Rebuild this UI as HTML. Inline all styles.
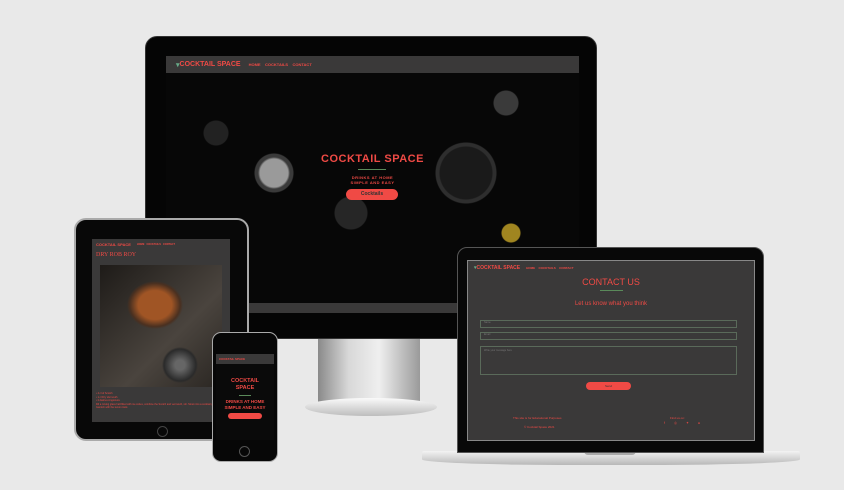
<!DOCTYPE html>
<html><head><style>
*{margin:0;padding:0;box-sizing:border-box}
body{width:844px;height:490px;background:#e9e9e9;position:relative;overflow:hidden;font-family:"Liberation Sans",sans-serif}
.a{position:absolute}
.nav{background:#3a3939;display:flex;align-items:center;font-weight:bold}
</style></head><body>
<!-- monitor stand -->
<div class="a" style="left:318px;top:336px;width:102px;height:70px;background:linear-gradient(90deg,#8a8a8a,#d8d8d8 30%,#efefef 60%,#9a9a9a);"></div>
<div class="a" style="left:305px;top:398px;width:132px;height:18px;border-radius:50%;background:linear-gradient(#fafafa,#bdbdbd);"></div>
<!-- monitor -->
<div class="a" style="left:145px;top:36px;width:452px;height:303px;background:#050505;border-radius:12px;border:1px solid #333"></div>
<div class="a" style="left:166px;top:56px;width:413px;height:257px;background:#3a3939">
  <div class="nav" style="height:17px;padding-left:10px;font-size:7px;color:#f04a45"><span style="color:#6a8">▾</span>COCKTAIL SPACE<span style="font-size:4px;margin-left:8px">HOME &nbsp;&nbsp; COCKTAILS &nbsp;&nbsp; CONTACT</span></div>
  <div style="position:absolute;top:17px;left:0;width:413px;height:230px;background:radial-gradient(circle at 108px 100px,#9a9a9a 0 14px,#3a3a3a 16px 19px,transparent 20px),radial-gradient(circle at 300px 100px,#1a1a1a 0 26px,#2e2e2e 27px 30px,transparent 31px),radial-gradient(circle at 345px 160px,#a08520 0 9px,transparent 10px),radial-gradient(circle at 340px 30px,#3a3a3a 0 12px,transparent 13px),radial-gradient(circle at 185px 140px,#262626 0 16px,transparent 17px),radial-gradient(circle at 50px 60px,#222 0 12px,transparent 13px),#070707">
    <div class="a" style="left:0;width:413px;top:80px;text-align:center;font-size:11px;font-weight:bold;color:#f04a45;letter-spacing:.5px">COCKTAIL SPACE</div>
    <div class="a" style="left:192px;top:96px;width:28px;height:1px;background:#5a8a5a"></div>
    <div class="a" style="left:0;width:413px;top:102px;text-align:center;font-size:4px;font-weight:bold;color:#f04a45;line-height:5px;letter-spacing:.5px">DRINKS AT HOME<br>SIMPLE AND EASY</div>
    <div class="a" style="left:180px;top:116px;width:52px;height:11px;border-radius:6px;background:#f04a45;font-size:5px;text-align:center;line-height:11px;color:#333;font-weight:bold">Cocktails</div>
  </div>
</div>
<!-- tablet -->
<div class="a" style="left:74px;top:218px;width:175px;height:223px;background:#080808;border-radius:12px;border:2px solid #aaa"></div>
<div class="a" style="left:157px;top:426px;width:11px;height:11px;border-radius:50%;border:1px solid #444"></div>
<div class="a" style="left:92px;top:239px;width:138px;height:183px;background:#3a3939">
  <div class="nav" style="height:10px;padding-left:4px;font-size:4px;color:#f04a45">COCKTAIL SPACE<span style="font-size:2.5px;margin-left:6px">HOME &nbsp; COCKTAILS &nbsp; CONTACT</span></div>
  <div style="font-family:'Liberation Serif',serif;font-size:6px;color:#f04a45;padding:3px 4px">DRY ROB ROY</div>
  <div class="a" style="left:8px;top:26px;width:122px;height:122px;background:radial-gradient(ellipse 28px 24px at 55px 40px,#a05525 0 60%,#4a3020 90%,transparent 100%),radial-gradient(circle at 80px 100px,#666 0 5px,#2a2a2a 16px,transparent 18px),linear-gradient(135deg,#1e1b18,#4a443e 60%,#2a2622)"></div>
  <div class="a" style="left:4px;top:153px;width:130px;font-size:2.5px;color:#f04a45;line-height:3.5px">• 4 cl of Scotch<br>• 1 cl Dry Vermouth<br>• 2 dashes Angostura<br>Fill a mixing glass half-filled with ice cubes, combine the Scotch and vermouth, stir. Strain into a cocktail glass, Garnish with the lemon twist.</div>
</div>
<!-- phone -->
<div class="a" style="left:212px;top:332px;width:66px;height:130px;background:#070707;border-radius:9px;border:1px solid #aaa"></div>
<div class="a" style="left:239px;top:446px;width:11px;height:11px;border-radius:50%;border:1px solid #555"></div>
<div class="a" style="left:216px;top:354px;width:58px;height:86px;background:#0a0a0a">
  <div class="nav" style="height:10px;padding-left:3px;font-size:3px;color:#f04a45">COCKTAIL SPACE</div>
  <div style="text-align:center;font-size:5.5px;font-weight:bold;color:#f04a45;margin-top:14px;line-height:7px">COCKTAIL<br>SPACE</div>
  <div style="margin:3px auto;width:12px;height:1px;background:#5a8a5a"></div>
  <div style="text-align:center;font-size:4.5px;font-weight:bold;color:#f04a45;line-height:5.5px">DRINKS AT HOME<br>SIMPLE AND EASY</div>
  <div style="margin:3px auto;width:34px;height:6px;border-radius:3px;background:#f04a45"></div>
</div>
<!-- laptop -->
<div class="a" style="left:422px;top:451px;width:378px;height:14px;border-radius:2px 2px 40% 40%;background:linear-gradient(#f3f3f3,#b8b8b8)"></div>
<div class="a" style="left:584px;top:451px;width:52px;height:4px;background:#aaa;border-radius:0 0 4px 4px"></div>
<div class="a" style="left:457px;top:247px;width:307px;height:206px;background:#080808;border-radius:10px 10px 0 0;border:1px solid #555"></div>
<div class="a" style="left:467px;top:260px;width:288px;height:181px;background:#3a3939;border:1px solid #888">
  <div class="nav" style="height:13px;padding-left:6px;font-size:5px;color:#f04a45"><span style="color:#6a8">▾</span>COCKTAIL SPACE<span style="font-size:3px;margin-left:6px">HOME &nbsp;&nbsp; COCKTAILS &nbsp;&nbsp; CONTACT</span></div>
  <div style="text-align:center;font-size:9px;color:#f04a45;margin-top:3px">CONTACT US</div>
  <div style="margin:3px auto;width:23px;height:1px;background:#5a8a5a"></div>
  <div style="text-align:center;font-size:6px;color:#f04a45;margin-top:10px">Let us know what you think</div>
  <div class="a" style="left:12px;top:59px;width:257px;height:8px;border:1px solid #5a6a5a;font-size:2.5px;color:#777;padding-left:3px">Name</div>
  <div class="a" style="left:12px;top:71px;width:257px;height:8px;border:1px solid #5a6a5a;font-size:2.5px;color:#777;padding-left:3px">Email</div>
  <div class="a" style="left:12px;top:85px;width:257px;height:29px;border:1px solid #5a6a5a;font-size:2.5px;color:#777;padding:2px 3px">Write your message here</div>
  <div class="a" style="left:118px;top:121px;width:45px;height:8px;border-radius:4px;background:#f04a45;font-size:3px;text-align:center;line-height:8px;color:#333">Send</div>
  <div class="a" style="left:45px;top:155px;font-size:3px;color:#f04a45">This site is for Educational Purposes</div>
  <div class="a" style="left:56px;top:164px;font-size:3px;color:#f04a45">© Cocktail Space 2021</div>
  <div class="a" style="left:202px;top:155px;font-size:3px;color:#f04a45">Find us on:</div>
  <div class="a" style="left:196px;top:160px;font-size:3.5px;color:#f04a45;letter-spacing:4px">f ◎ ✦ ●</div>
</div>
</body></html>
